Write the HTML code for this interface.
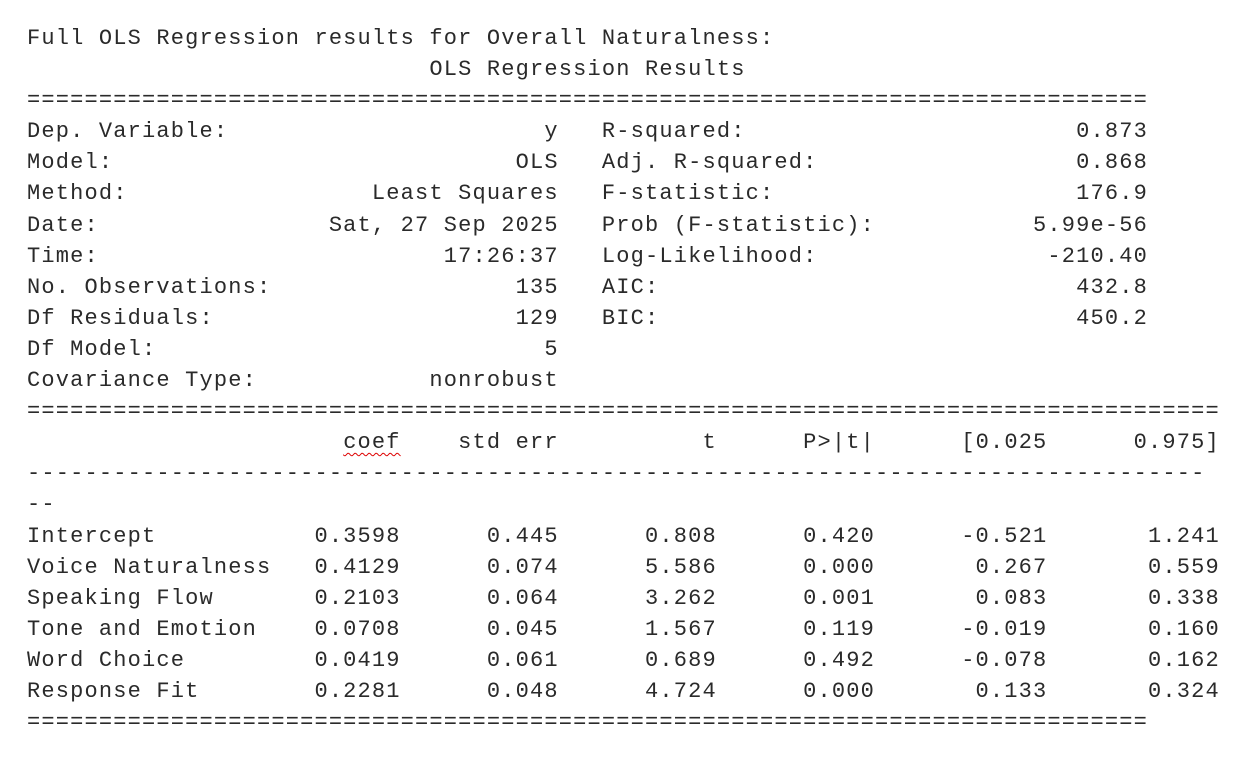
<!DOCTYPE html>
<html><head><meta charset="utf-8"><style>
html,body{margin:0;padding:0;background:#fff;width:1256px;height:764px;overflow:hidden}
pre{margin:0;position:absolute;left:27px;top:23px;font-family:"Liberation Mono",monospace;font-size:22px;letter-spacing:1.17px;line-height:31.1px;color:#2a2a2a;white-space:pre}
.w{text-decoration:underline wavy #d00;text-decoration-thickness:1px;text-underline-offset:4px}
</style></head><body>
<pre>Full OLS Regression results for Overall Naturalness:
                            OLS Regression Results
==============================================================================
Dep. Variable:                      y   R-squared:                       0.873
Model:                            OLS   Adj. R-squared:                  0.868
Method:                 Least Squares   F-statistic:                     176.9
Date:                Sat, 27 Sep 2025   Prob (F-statistic):           5.99e-56
Time:                        17:26:37   Log-Likelihood:                -210.40
No. Observations:                 135   AIC:                             432.8
Df Residuals:                     129   BIC:                             450.2
Df Model:                           5
Covariance Type:            nonrobust
===================================================================================
                      <span class="w">coef</span>    std err          t      P&gt;|t|      [0.025      0.975]
----------------------------------------------------------------------------------
--
Intercept           0.3598      0.445      0.808      0.420      -0.521       1.241
Voice Naturalness   0.4129      0.074      5.586      0.000       0.267       0.559
Speaking Flow       0.2103      0.064      3.262      0.001       0.083       0.338
Tone and Emotion    0.0708      0.045      1.567      0.119      -0.019       0.160
Word Choice         0.0419      0.061      0.689      0.492      -0.078       0.162
Response Fit        0.2281      0.048      4.724      0.000       0.133       0.324
==============================================================================</pre>
</body></html>
